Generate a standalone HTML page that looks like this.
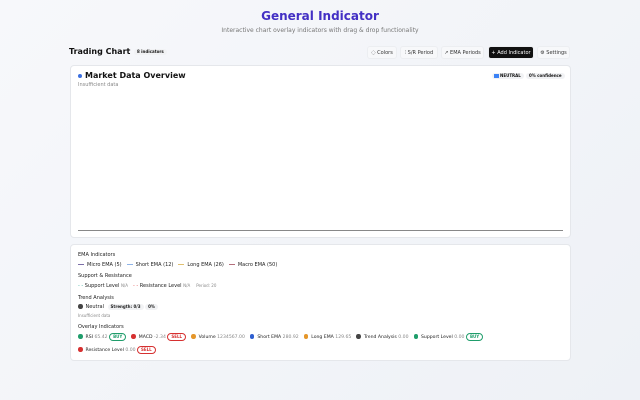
<!DOCTYPE html>
<html><head><meta charset="utf-8"><style>
*{box-sizing:border-box;margin:0;padding:0}
body{width:640px;height:400px;background:linear-gradient(135deg,#f7f8fb,#eef1f6);font-family:"DejaVu Sans","Liberation Sans",sans-serif;color:#111;position:relative;overflow:hidden}
.a{position:absolute;white-space:nowrap}
h1{position:absolute;left:0;width:640px;top:9px;text-align:center;font-size:12px;color:#4330c4;font-weight:bold}
.sub{left:0;width:640px;top:27px;text-align:center;font-size:6px;color:#777}
.btn{position:absolute;top:46px;height:13px;border-radius:3px;background:#f7f8fa;border:0.5px solid #eceef1;font-size:5px;color:#333;line-height:12px;text-align:center}
.card{position:absolute;left:70px;width:501px;background:#fff;border:1px solid #e5e7eb;border-radius:4px}
.t{font-size:5px;color:#222}
.g{color:#888}
.pill{display:inline-block;border-radius:5px;font-size:4px;padding:0 3px;line-height:6px;font-weight:bold}
.dot{display:inline-block;width:4.5px;height:4.5px;border-radius:50%;vertical-align:-0.5px;margin-right:3px}
.ln{display:inline-block;width:6px;height:1px;vertical-align:1.5px;margin-right:3px}
.row span.i{margin-right:5px}
.ov{font-size:4.6px}
</style></head><body>
<h1>General Indicator</h1>
<div class="a sub">Interactive chart overlay indicators with drag &amp; drop functionality</div>
<div class="a" style="left:69px;top:47px;font-size:8px;font-weight:bold">Trading Chart</div>
<div class="a pill" style="left:134px;top:49px;background:#f1f2f4;color:#111">8 indicators</div>
<div class="btn" style="left:367px;width:30px">◌ Colors</div>
<div class="btn" style="left:400px;width:38px">⫶ S/R Period</div>
<div class="btn" style="left:441px;width:43px">↗ EMA Periods</div>
<div class="btn" style="left:488px;width:46px;background:#111;color:#fff">+ Add Indicator</div>
<div class="btn" style="left:537px;width:33px">⚙ Settings</div>

<div class="card" style="top:65px;height:173px">
 <div class="a" style="left:7px;top:8px;width:4px;height:4px;border-radius:50%;background:#3b6fe0"></div>
 <div class="a" style="left:14px;top:5px;font-size:8px;font-weight:bold">Market Data Overview</div>
 <div class="a t g" style="left:7px;top:16px">Insufficient data</div>
 <div class="a pill" style="left:421px;top:7px;background:#f1f2f4;padding-left:2px"><span style="display:inline-block;width:5px;height:4px;background:#3b82f6;vertical-align:-0.5px;margin-right:1px"></span>NEUTRAL</div>
 <div class="a pill" style="left:455px;top:7px;background:#f1f2f4">0% confidence</div>
 <div class="a" style="left:7px;top:164px;width:485px;height:1px;background:#888"></div>
</div>

<div class="card" style="top:244px;height:117px">
 <div class="a t" style="left:7px;top:7px">EMA Indicators</div>
 <div class="a t row" style="left:7px;top:17px"><span class="ln" style="background:#7c6fa8"></span><span class="i">Micro EMA (5)</span><span class="ln" style="background:#8fb4e8"></span><span class="i">Short EMA (12)</span><span class="ln" style="background:#e0c070"></span><span class="i">Long EMA (26)</span><span class="ln" style="background:#b46f7c"></span>Macro EMA (50)</div>
 <div class="a t" style="left:7px;top:28px">Support &amp; Resistance</div>
 <div class="a t row" style="left:7px;top:38px"><span style="color:#3a9">- -</span> Support Level <span class="g" style="font-size:4px;margin-right:5px">N/A</span><span style="color:#e05050">- -</span> Resistance Level <span class="g" style="font-size:4px;margin-right:6px">N/A</span><span class="g" style="font-size:4px">Period: 20</span></div>
 <div class="a t" style="left:7px;top:50px">Trend Analysis</div>
 <div class="a t" style="left:7px;top:59px"><span class="dot" style="background:#444"></span>Neutral <span class="pill" style="background:#f1f2f4;margin-left:2px">Strength: 0/3</span> <span class="pill" style="background:#f1f2f4">0%</span></div>
 <div class="a g" style="left:7px;top:68px;font-size:4px">Insufficient data</div>
 <div class="a t" style="left:7px;top:79px">Overlay Indicators</div>
 <div class="a t row ov" style="left:7px;top:88px"><span class="dot" style="background:#1f9d6b"></span>RSI <span class="g">65.42</span> <span class="pill" style="border:0.7px solid #1f9d6b;color:#1f9d6b;margin-right:5px">BUY</span><span class="dot" style="background:#d63030"></span>MACD <span class="g">-2.34</span> <span class="pill" style="border:0.7px solid #d63030;color:#d63030;margin-right:5px">SELL</span><span class="dot" style="background:#e5962a"></span>Volume <span class="g i">1234567.00</span><span class="dot" style="background:#2f5fd0"></span>Short EMA <span class="g i">280.92</span><span class="dot" style="background:#e5962a"></span>Long EMA <span class="g i">129.65</span><span class="dot" style="background:#444"></span>Trend Analysis <span class="g i">0.00</span><span class="dot" style="background:#1f9d6b"></span>Support Level <span class="g">0.00</span> <span class="pill" style="border:0.7px solid #1f9d6b;color:#1f9d6b">BUY</span></div>
 <div class="a t row ov" style="left:7px;top:101px"><span class="dot" style="background:#d63030"></span>Resistance Level <span class="g">0.00</span> <span class="pill" style="border:0.7px solid #d63030;color:#d63030">SELL</span></div>
</div>
</body></html>
